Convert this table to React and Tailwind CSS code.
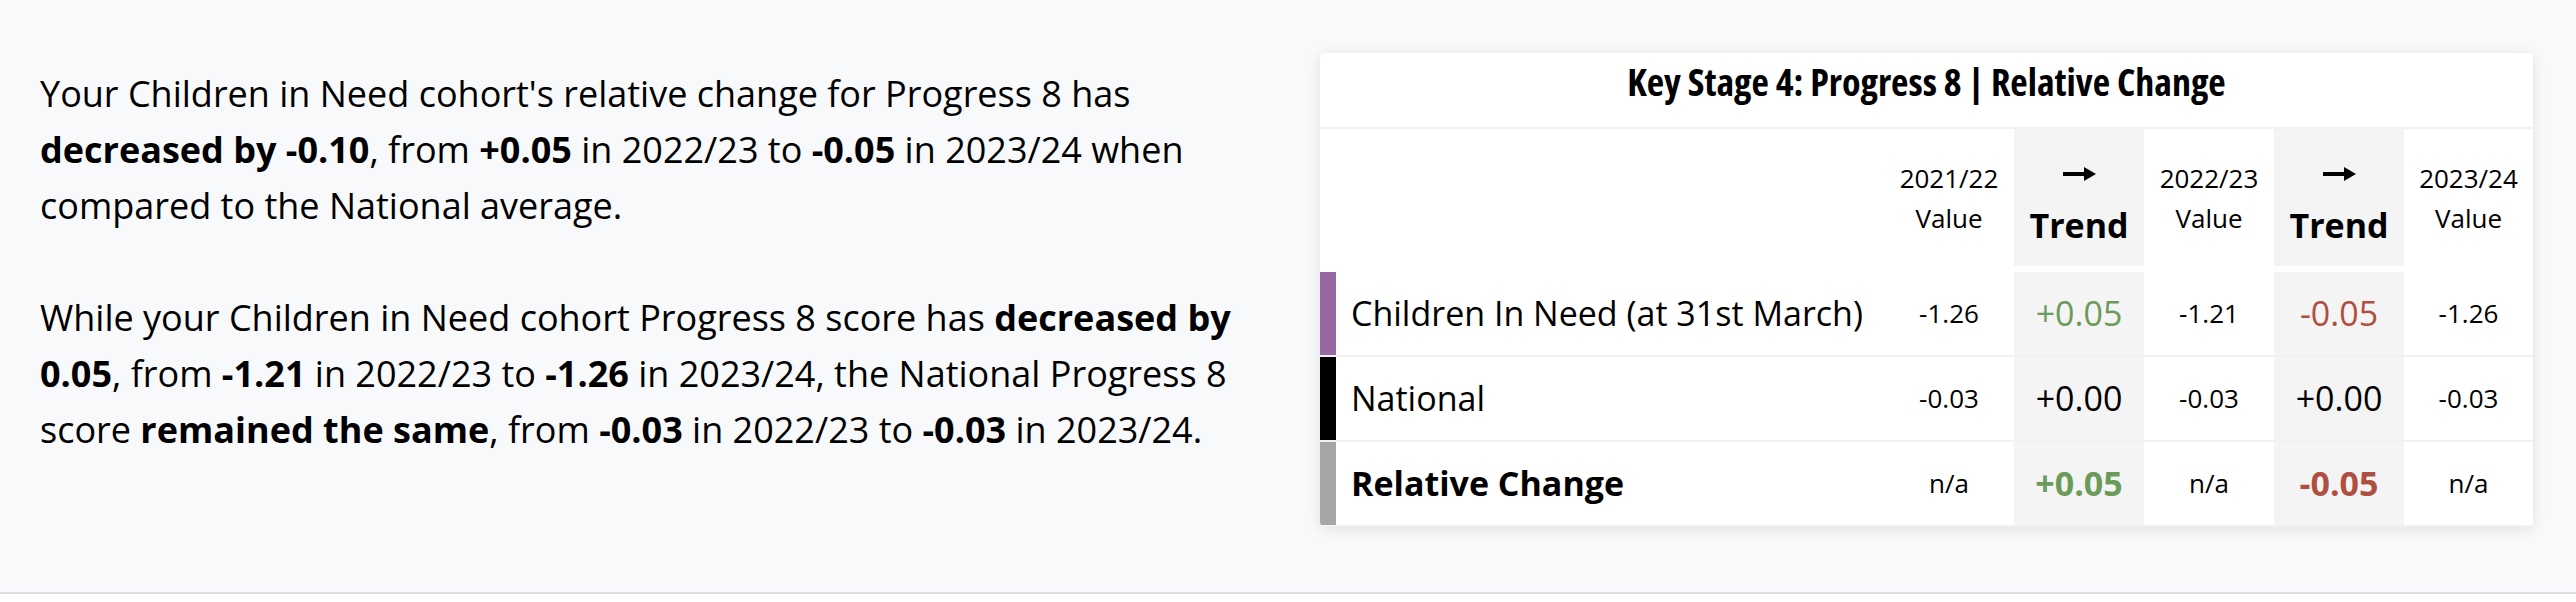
import React from 'react';

const rows = [
  {
    label: 'Children In Need (at 31st March)',
    bar: 'bg-[#9868a3]',
    bold: false,
    cells: [
      { v: '-1.26' },
      { v: '+0.05', tone: 'up' },
      { v: '-1.21' },
      { v: '-0.05', tone: 'down' },
      { v: '-1.26' },
    ],
  },
  {
    label: 'National',
    bar: 'bg-black',
    bold: false,
    cells: [
      { v: '-0.03' },
      { v: '+0.00' },
      { v: '-0.03' },
      { v: '+0.00' },
      { v: '-0.03' },
    ],
  },
  {
    label: 'Relative Change',
    bar: 'bg-[#a6a6a6]',
    bold: true,
    cells: [
      { v: 'n/a' },
      { v: '+0.05', tone: 'up' },
      { v: 'n/a' },
      { v: '-0.05', tone: 'down' },
      { v: 'n/a' },
    ],
  },
];

function TrendArrow() {
  return (
    <svg width="33" height="14" viewBox="0 0 33 14" className="block">
      <rect x="0" y="5" width="23" height="4" fill="black" />
      <polygon points="21,0 33,7 21,14" fill="black" />
    </svg>
  );
}

function ValueHead({ year }) {
  return (
    <div className="flex flex-col items-center justify-center bg-white text-[26px] leading-[40px]">
      <span>{year}</span>
      <span>Value</span>
    </div>
  );
}

function TrendHead() {
  return (
    <div className="flex flex-col items-center justify-center bg-[#f4f4f4] pt-[16px]">
      <TrendArrow />
      <span className="mt-[24px] text-[34px] font-bold leading-[40px]">Trend</span>
    </div>
  );
}

export default function App() {
  return (
    <div className="h-[602px] bg-white font-['Open_Sans',sans-serif] text-black">
      <div className="flex h-[594px] border-b-2 border-[#dcdee4] bg-[#f8f9fb] pl-[40px] pr-[43px] pt-[53px]">
        {/* Summary text */}
        <div className="flex-1 pr-[40px] pt-[13px] text-[36px] leading-[56px]">
          <p>
            Your Children in Need cohort's relative change for Progress 8 has <b>decreased by -0.10</b>, from{' '}
            <b>+0.05</b> in 2022/23 to <b>-0.05</b> in 2023/24 when compared to the National average.
          </p>
          <p className="mt-[56px]">
            While your Children in Need cohort Progress 8 score has <b>decreased by 0.05</b>, from <b>-1.21</b> in
            2022/23 to <b>-1.26</b> in 2023/24, the National Progress 8 score <b>remained the same</b>, from{' '}
            <b>-0.03</b> in 2022/23 to <b>-0.03</b> in 2023/24.
          </p>
        </div>

        {/* Table card */}
        <div className="w-[1213px] self-start overflow-hidden rounded-[5px] bg-white shadow-[0_2px_14px_rgba(0,0,0,0.10)]">
          <div className="flex h-[76px] items-center justify-center border-b-2 border-[#f2f2f2] pb-[18px]">
            <h2 className="text-[38px] font-bold leading-none [font-stretch:75%]">
              Key Stage 4: Progress 8 | Relative Change
            </h2>
          </div>

          <div className="grid h-[137px] grid-cols-[564px_130px_130px_130px_130px_129px]">
            <div className="bg-white" />
            <ValueHead year="2021/22" />
            <TrendHead />
            <ValueHead year="2022/23" />
            <TrendHead />
            <ValueHead year="2023/24" />
          </div>

          <div className="mt-[6px] flex flex-col gap-[2px] bg-[#f1f1f1] pb-[2px]">
            {rows.map((row, i) => (
              <div key={i} className="grid h-[83px] grid-cols-[16px_548px_130px_130px_130px_130px_129px]">
                <div className={row.bar} />
                <div
                  className={`flex items-center bg-white pl-[15px] text-[34px] ${row.bold ? 'font-bold' : ''}`}
                >
                  {row.label}
                </div>
                {row.cells.map((c, j) => {
                  const trend = j % 2 === 1;
                  let color = 'text-black';
                  if (c.tone === 'up') color = 'text-[#6a9b58]';
                  if (c.tone === 'down') color = 'text-[#b04f40]';
                  return (
                    <div
                      key={j}
                      className={`flex items-center justify-center ${
                        trend ? 'bg-[#f4f4f4] text-[34px]' : 'bg-white text-[26px]'
                      } ${color} ${trend && row.bold ? 'font-bold' : ''}`}
                    >
                      {c.v}
                    </div>
                  );
                })}
              </div>
            ))}
          </div>
        </div>
      </div>
    </div>
  );
}
